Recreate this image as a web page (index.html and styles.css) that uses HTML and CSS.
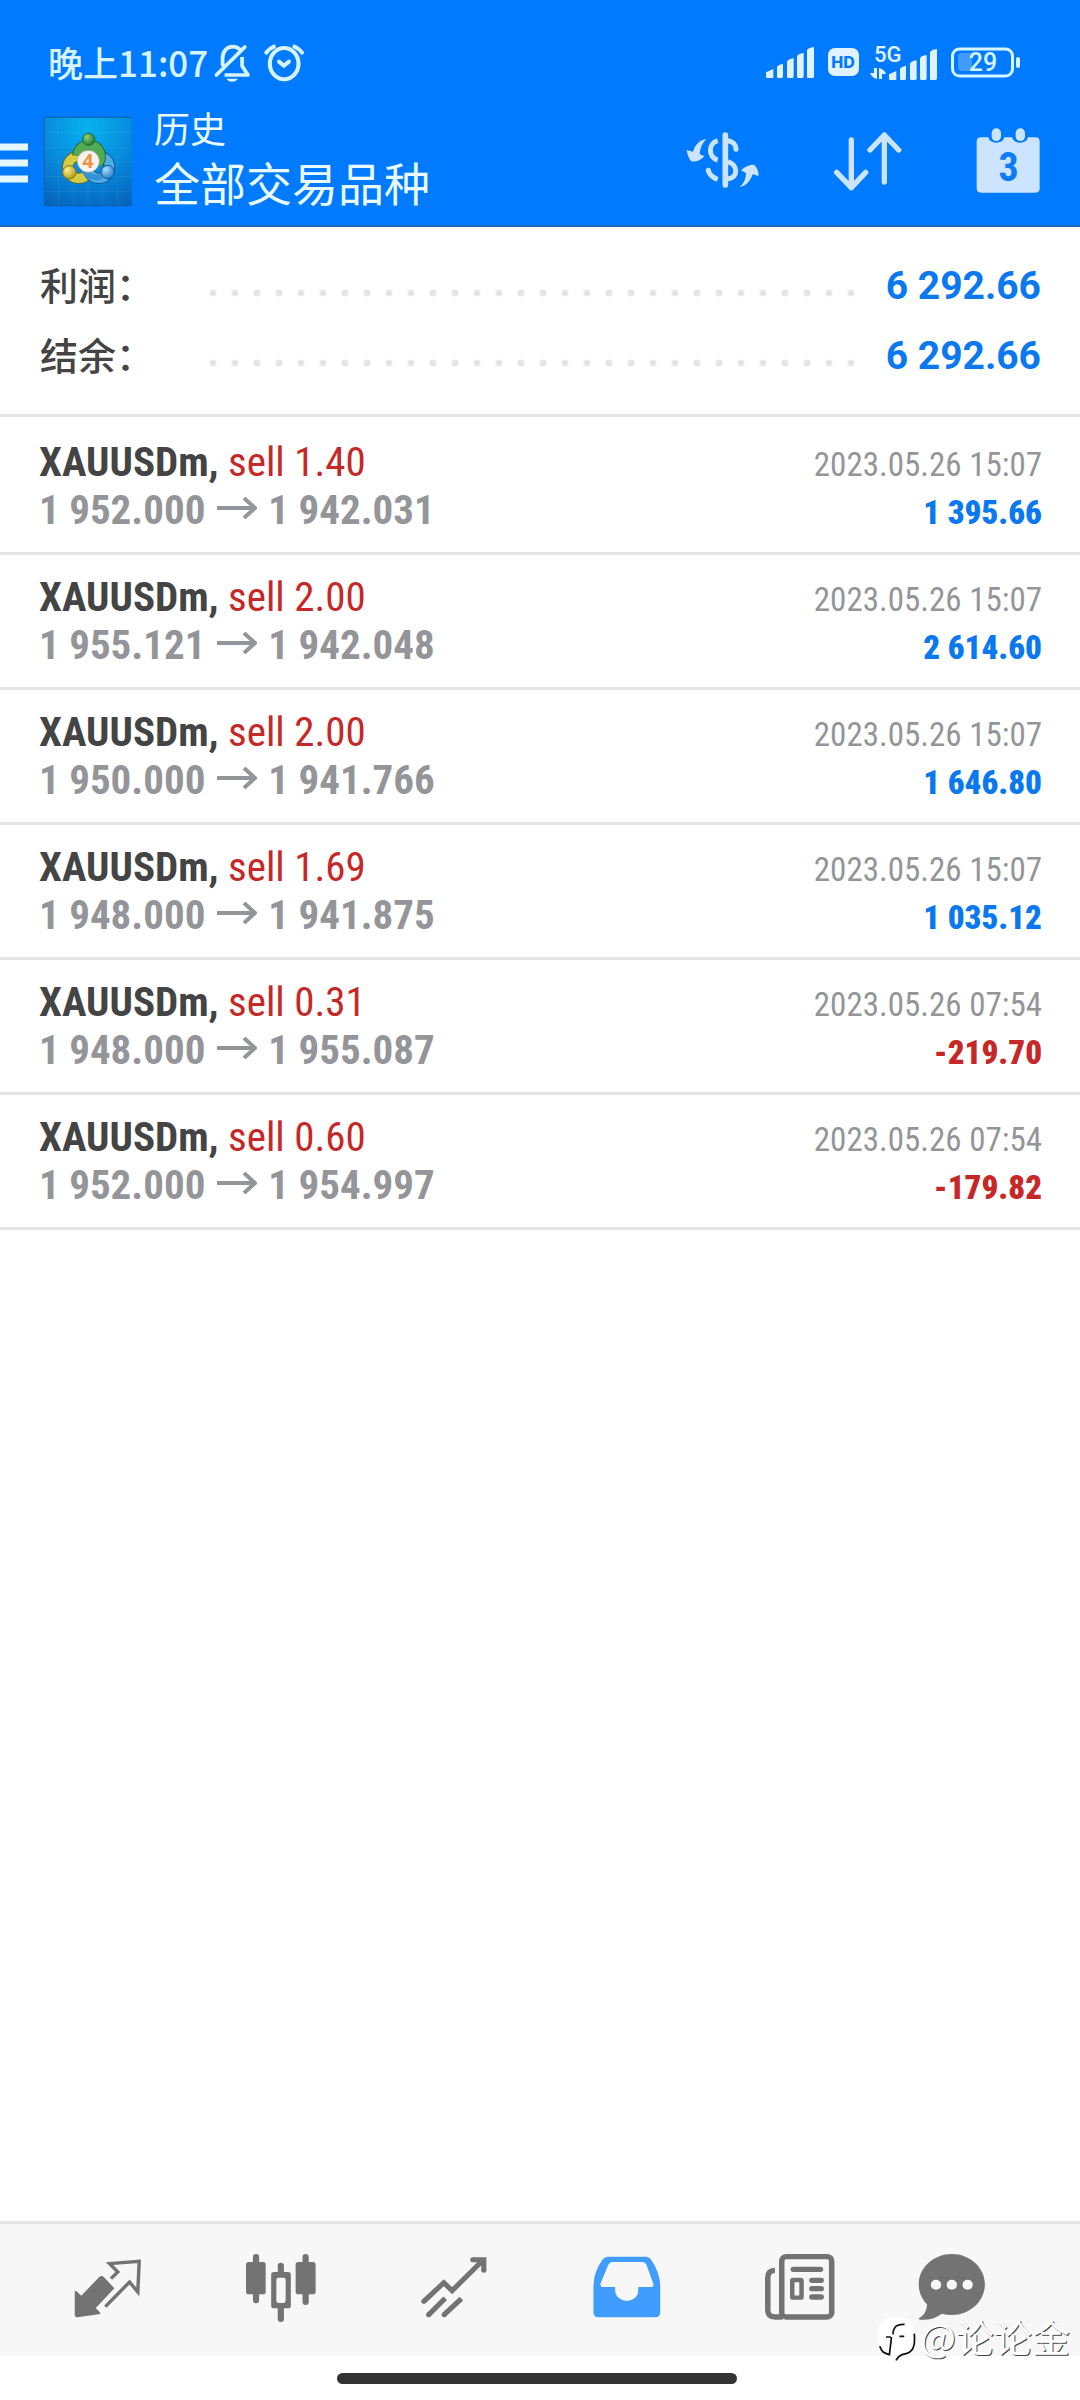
FILE: index.html
```html
<!DOCTYPE html>
<html lang="zh-CN">
<head>
<meta charset="utf-8">
<meta name="viewport" content="width=device-width">
<title>历史</title>
<link rel="stylesheet" href="styles.css">
</head>
<body>
<svg class="defs" aria-hidden="true">
  <symbol id="arrow" viewBox="0 0 40 22"><path d="M0 11h38M27 1l11 10-11 10" fill="none" stroke="currentColor" stroke-width="4"/></symbol>
</svg>
<header class="header">
  <div class="status">
    <span class="clock">晚上11:07</span>
    <svg class="bell" width="36" height="38" viewBox="625 133 105 114" preserveAspectRatio="none" fill="none" stroke="#d6f3ff" stroke-width="11">
      <path d="M650 196v-20c0-20 12-35 29-35 10 0 18 4 24 11M632 226l83-84" stroke-linecap="round"/>
      <path d="M707 172v27l17 27h-68" stroke-linejoin="round"/>
      <path d="M661 237h34q-6 9-17 9t-17-9z" fill="#d6f3ff" stroke="none"/>
    </svg>
    <svg class="alarm" width="40" height="38" viewBox="767 133 117 112" preserveAspectRatio="none" fill="none" stroke="#d6f3ff" stroke-width="12" stroke-linecap="round">
      <ellipse cx="826" cy="191" rx="42" ry="46"/><path d="M774 158q8-11 22-17M878 158q-8-11-22-17M811 185l14 12 15-12"/>
    </svg>
    <span class="spacer"></span>
    <svg width="48" height="32" viewBox="375 144 144 96" fill="#e0f2ff"><path id="bars" d="M375 220l22-10v27h-18q-4 0-4-4zM408 204q0-5 18-10v38q0 5-4 5h-10q-4 0-4-4zM438 188q2-7 20-10v54q0 5-4 5h-12q-4 0-4-4zM468 172q2-7 20-10v70q0 5-4 5h-12q-4 0-4-4zM498 154q2-7 21-10v88q0 5-4 5h-13q-4 0-4-4z"/></svg>
    <svg class="volte" width="31" height="32" viewBox="0 0 31 32"><rect y="1" width="31" height="28" rx="7" fill="#e0f2ff"/><text x="15" y="21" class="hd" text-anchor="middle">HD</text></svg>
    <svg width="67" height="36" viewBox="0 0 67 36" fill="#e0f2ff"><text x="4" y="17" class="gen">5G</text><path d="M0 28h4v-5h3v11q-5-1-7-6zM9 23q5 1 7 6h-4v5H9z"/><use href="#bars" transform="translate(-106 -44) scale(.3333)"/></svg>
    <svg width="69" height="32" viewBox="0 0 69 32"><rect x="1.500" y="2" width="60" height="27" rx="7" fill="none" stroke="#d6f6ff" stroke-width="3"/><path d="M11 6h10v18H11q-4 0-4-4v-10q0-4 4-4z" fill="#409cff"/><rect x="65" y="10" width="4" height="11" rx="2" fill="#d6f6ff"/><text x="32" y="24" class="pct" text-anchor="middle">29</text></svg>
  </div>
  <div class="bar">
    <button class="menu" aria-label="菜单"><svg width="28" height="40"><path d="M0 4h28M0 20h28M0 36h28" stroke="#e6f6ff" stroke-width="7"/></svg></button>
    <svg class="logo" width="88" height="89" viewBox="42 49 264 267" preserveAspectRatio="none">
      <defs>
        <radialGradient id="sky" cx=".5" cy=".1" r="1"><stop offset="0" stop-color="#06b2ef"/><stop offset=".5" stop-color="#078bdd"/><stop offset="1" stop-color="#0563bb"/></radialGradient>
        <radialGradient id="gr" cx=".35" cy=".3" r=".8"><stop offset="0" stop-color="#8fd07a"/><stop offset="1" stop-color="#16752b"/></radialGradient>
        <radialGradient id="ye" cx=".35" cy=".3" r=".8"><stop offset="0" stop-color="#fff08a"/><stop offset="1" stop-color="#a89315"/></radialGradient>
        <radialGradient id="bl" cx=".35" cy=".3" r=".8"><stop offset="0" stop-color="#a9dcff"/><stop offset="1" stop-color="#1873bd"/></radialGradient>
      </defs>
      <path fill="url(#sky)" d="M42 49h264v267H42z"/>
      <path d="M86 49v267M130 49v267M174 49v267M218 49v267M262 49v267M42 96h264M42 140h264M42 184h264M42 228h264M42 272h264" stroke="#4fb8f2" stroke-opacity=".25" stroke-width="2" fill="none"/>
      <path d="M42 50h264M43 49v267M42 315h264" stroke="#145fa8" stroke-width="3" fill="none"/>
      <g fill="none">
        <circle cx="146" cy="200" r="33" stroke="#735f14" stroke-width="33"/><circle cx="146" cy="200" r="33" stroke="#d5cc45" stroke-width="28"/>
        <circle cx="206" cy="200" r="33" stroke="#075591" stroke-width="33"/><circle cx="206" cy="200" r="33" stroke="#54aee4" stroke-width="28"/>
        <path d="M143 165a34 34 0 1 1 60 24" stroke="#155f29" stroke-width="33"/><path d="M143 165a34 34 0 1 1 60 24" stroke="#52aa52" stroke-width="28"/>
        <path d="M160 210q25 28 55 18" stroke="#3194d6" stroke-width="17"/>
      </g>
      <g stroke-width="3"><circle cx="176" cy="116" r="18" fill="url(#gr)" stroke="#176a2b"/><circle cx="118" cy="215" r="20" fill="url(#ye)" stroke="#84741a"/><circle cx="233" cy="214" r="20" fill="url(#bl)" stroke="#0a5797"/></g>
      <circle cx="175" cy="182" r="33" fill="#f4f3f1" stroke="#a8a18d" stroke-width="2"/>
      <text x="174" y="203" text-anchor="middle" class="four">4</text>
    </svg>
    <div class="titles"><h1>历史</h1><p>全部交易品种</p></div>
    <button aria-label="货币"><svg width="74" height="60" viewBox="136 391 222 180" fill="none" stroke="#cce4ff" stroke-width="15">
      <path d="M254 403v150" stroke-width="17" stroke-linecap="round"/>
      <path d="M231 420c-29 8-29 50 0 58M203 509c3 15 13 22 28 27"/><path d="M203 509v1M262 420c14 2 24 12 24 26M286 445v1" stroke-linecap="round"/><path d="M262 483c31 10 31 48 0 52"/>
      <g fill="#cce4ff" stroke="none"><path d="M197 415c-18 2-33 15-40 38l-19-5c2 15 7 26 14 34 13 3 27-2 39-15l-14-7c1-18 8-33 20-45z"/><path d="M296 560c20-4 33-18 40-39l18 5c0-16-6-27-14-34-14 0-29 6-39 17l15 8c0 18-8 33-20 43z"/></g>
    </svg></button>
    <button aria-label="排序"><svg width="70" height="60" viewBox="571 391 210 180" fill="none" stroke="#cce4ff" stroke-width="16" stroke-linecap="round" stroke-linejoin="round"><path d="M626 418v143M582 515l44 46 43-46M725 544V403M682 448l43-45 43 45"/></svg></button>
    <button aria-label="日历"><svg width="66" height="68" viewBox="1007 380 198 204"><path d="M1022 411h22q4 16 24 16t24-16h23q4 16 24 16t24-16h22q13 0 13 13v140q0 13-13 13h-163q-13 0-13-13V424q0-13 13-13z" fill="#cce4ff"/><rect x="1054" y="384" width="28" height="38" rx="14" fill="#cce4ff"/><rect x="1126" y="384" width="28" height="38" rx="14" fill="#cce4ff"/><text x="1105" y="542" text-anchor="middle" class="day">3</text></svg></button>
  </div>
</header>
<main class="main">
  <dl class="summary">
    <div><dt>利润：</dt><dd><span class="dots"></span>6 292.66</dd></div>
    <div><dt>结余：</dt><dd><span class="dots"></span>6 292.66</dd></div>
  </dl>
  <ul class="deals">
    <li><div class="line"><span><b>XAUUSDm,</b> <span class="side">sell 1.40</span></span><time>2023.05.26 15:07</time></div><div class="line price"><span>1 952.000 <svg class="to"><use href="#arrow"/></svg> 1 942.031</span><b class="gain">1 395.66</b></div></li>
    <li><div class="line"><span><b>XAUUSDm,</b> <span class="side">sell 2.00</span></span><time>2023.05.26 15:07</time></div><div class="line price"><span>1 955.121 <svg class="to"><use href="#arrow"/></svg> 1 942.048</span><b class="gain">2 614.60</b></div></li>
    <li><div class="line"><span><b>XAUUSDm,</b> <span class="side">sell 2.00</span></span><time>2023.05.26 15:07</time></div><div class="line price"><span>1 950.000 <svg class="to"><use href="#arrow"/></svg> 1 941.766</span><b class="gain">1 646.80</b></div></li>
    <li><div class="line"><span><b>XAUUSDm,</b> <span class="side">sell 1.69</span></span><time>2023.05.26 15:07</time></div><div class="line price"><span>1 948.000 <svg class="to"><use href="#arrow"/></svg> 1 941.875</span><b class="gain">1 035.12</b></div></li>
    <li><div class="line"><span><b>XAUUSDm,</b> <span class="side">sell 0.31</span></span><time>2023.05.26 07:54</time></div><div class="line price"><span>1 948.000 <svg class="to"><use href="#arrow"/></svg> 1 955.087</span><b class="loss">-219.70</b></div></li>
    <li><div class="line"><span><b>XAUUSDm,</b> <span class="side">sell 0.60</span></span><time>2023.05.26 07:54</time></div><div class="line price"><span>1 952.000 <svg class="to"><use href="#arrow"/></svg> 1 954.997</span><b class="loss">-179.82</b></div></li>
  </ul>
</main>
<footer class="footer">
  <nav class="tabs">
    <a href="#quotes" aria-label="行情"><svg viewBox="211 156 209 216" preserveAspectRatio="none"><path d="M297 228q4 0 7 4l30 33-54 59 13 14v4l-66 10q-8 0-8-7v-73l5 2 14 13 52-56q3-3 7-3z" fill="#737373"/><path d="M308 320l70-74 24 30 4-92-86 7 24 25-20 20" fill="none" stroke="#737373" stroke-width="10"/></svg></a>
    <a href="#charts" aria-label="图表"><svg viewBox="712 156 209 216" preserveAspectRatio="none" fill="#737373"><rect x="715" y="186" width="57" height="97" rx="8"/><rect x="859" y="186" width="58" height="97" rx="8"/><path d="M744 171v130M888 171v135M816 197v22M816 322v35" stroke="#737373" stroke-width="18" stroke-linecap="round"/><path fill-rule="evenodd" d="M796 216h41q8 0 8 8v93q0 8-8 8h-41q-8 0-8-8v-93q0-8 8-8zm14 17q-7 0-7 7v62q0 7 7 7h13q7 0 7-7v-62q0-7-7-7z"/></svg></a>
    <a href="#trade" aria-label="交易"><svg viewBox="1214 156 209 216" preserveAspectRatio="none" fill="none" stroke="#737373" stroke-width="15"><path d="M1231 304l58-56 24 24 90-92M1245 344l48-49M1290 344l50-48M1373 179h32v32" stroke-linejoin="miter"/><path d="M1231 304l1-1M1245 344l1-1M1290 344l1-1M1373 179h1M1405 211v-1" stroke-linecap="round"/></svg></a>
    <a href="#history" aria-label="历史" aria-current="page"><svg viewBox="150 156 209 216" preserveAspectRatio="none"><path fill="#409cff" fill-rule="evenodd" d="M199 170h112q8 0 13 8 27 41 27 82v77q0 15-14 15H171q-14 0-14-15v-77q0-43 27-82 6-8 15-8zm13 16q-8 0-12 9l-22 55q-3 11 7 11h35v8q0 15 10 24t24 10q14-1 24-10t9-24v-8h36q10 0 8-10l-20-57q-3-8-12-8z"/></svg></a>
    <a href="#news" aria-label="新闻"><svg viewBox="654 156 209 216" preserveAspectRatio="none" fill="none" stroke="#737373" stroke-width="16"><rect x="705.500" y="170" width="145" height="181" rx="13"/><path d="M686 211q-21 0-21 22v97q0 21 21 21h22"/><g stroke-linecap="round"><path d="M739 208h79M793 241h27M793 266h27M793 291h27"/></g><rect x="736" y="240" width="27" height="53" rx="3" stroke-width="13"/></svg></a>
    <a href="#chat" aria-label="消息"><svg viewBox="1095 156 209 216" preserveAspectRatio="none"><path d="M1199 162c53 0 96 41 96 91s-43 92-96 92q-16 0-29-4-29 22-64 18l-3-4q23-12 24-42c-15-16-24-36-24-60 0-50 43-91 96-91z" fill="#737373"/><g fill="#f7f7f7"><circle cx="1153" cy="254" r="15"/><circle cx="1199" cy="254" r="15"/><circle cx="1245" cy="254" r="15"/></g></svg></a>
  </nav>
  <div class="home"></div>
  <div class="mark">
    <svg width="40" height="46" viewBox="976 360 116 138" preserveAspectRatio="none"><path d="M978 420c0-42 14-59 54-59s53 17 53 59c0 38-10 50-36 56l-20 14v-14c-37-1-51-15-51-56z" fill="#fff"/><path d="M1084 410c4 42-5 58-33 62-8 2-12 5-20 18M984 448c5 16 12 21 28 25l6-53M1056 382c-22-1-32 6-34 30M1002 420h14M1041 418h14" fill="none" stroke="#111" stroke-width="5"/></svg>
    <span>@论论金</span>
  </div>
</footer>
</body>
</html>
```
FILE: styles.css
```css
* { box-sizing: border-box; }
body {
  margin: 0;
  min-height: 100vh;
  display: flex;
  flex-direction: column;
  background: #fff;
  color: #444;
  font-family: Roboto, "Noto Sans CJK SC", sans-serif;
}
h1, p, ul, dl, dd { margin: 0; padding: 0; font-weight: 400; }
svg { display: block; flex: none; overflow: visible; }
.defs { position: absolute; width: 0; height: 0; }
button { border: 0; padding: 0; background: none; }

.header { background: #007aff; border-bottom: 2px solid #1769b8; }
.status { display: flex; align-items: center; gap: 14px; height: 100px; padding: 26px 60px 0 48px; }
.clock { color: #d6f3ff; font: 500 35px/40px "Noto Sans CJK SC", sans-serif; padding-bottom: 2px; }
.bell { margin-left: -8px; }
.spacer { flex: 1; }
.volte { margin-right: -3px; }
.hd { font: 800 16px Inter, sans-serif; fill: #007aff; }
.gen { font: 500 22px Roboto, sans-serif; }
.pct { font: 500 25px Roboto, sans-serif; fill: #d6f6ff; }
.four { font: 700 58px "Open Sans", sans-serif; fill: #f0923c; }
.day { font: 700 120px "Roboto Condensed", sans-serif; fill: #0a7cf5; }
.bar { display: flex; align-items: center; height: 125px; padding-right: 38px; padding-bottom: 3px; }
.menu { margin: 4px 16px 0 0; }
.titles { flex: 1; margin-left: 22px; padding-bottom: 6px; color: #e9fbff; font-family: "Noto Sans CJK SC", sans-serif; }
.titles h1 { font-size: 36px; line-height: 46px; }
.titles p { font-size: 46px; line-height: 62px; }
.bar button + button { margin-left: 73px; }

.main { flex: 1; }
.summary { display: flex; flex-direction: column; gap: 22px; padding: 34px 39px 35px 40px; border-bottom: 3px solid #e4e4e4; font-size: 39px; line-height: 50px; }
.summary div { display: flex; height: 48px; }
.summary dt { width: 162px; font-size: 38px; line-height: 45px; font-weight: 500; font-family: "Noto Sans CJK SC", sans-serif; }
.summary dd { flex: 1; display: flex; color: #0a78ee; font-weight: 700; }
.dots { flex: 1; margin-right: 26px; background: radial-gradient(circle, #e4e4e4 3px, transparent 4px) 0 8px / 22px 48px repeat-x; }

.deals { list-style: none; padding-top: 3px; font-family: "Roboto Condensed", "Liberation Sans Narrow", sans-serif; }
.deals li { padding: 18px 38px 18px 39px; border-bottom: 3px solid #e4e4e4; }
.line { display: flex; justify-content: space-between; align-items: baseline; height: 48px; font-size: 41px; line-height: 48px; }
.side { color: #c62828; }
.price { color: #949599; font-weight: 700; }
.to { display: inline-block; width: 40px; height: 22px; margin: 0 2px; vertical-align: 5px; }
.line time, .line .gain, .line .loss { font-size: 33px; }
.line time { color: #949599; }
.gain { color: #0a78ee; }
.loss { color: #c62828; }

.footer { position: relative; height: 179px; }
.tabs { display: grid; grid-template-columns: repeat(5, 173fr) 131fr; height: 135px; padding: 0 62px 4px 21px; border-top: 3px solid #e4e4e4; background: #f7f7f7; }
.tabs a { display: grid; place-items: center; }
.tabs svg { width: 72px; height: 72px; }
.home { width: 37%; height: 11px; margin: 17px auto 0; border-radius: 6px; background: #333; position: relative; right: 3px; }
.mark { position: absolute; right: 10px; top: 96px; display: flex; gap: 3px; color: #fff; font: 400 38px/38px "Noto Sans CJK SC", sans-serif; text-shadow: 1px 1px 0 #444; }
```
